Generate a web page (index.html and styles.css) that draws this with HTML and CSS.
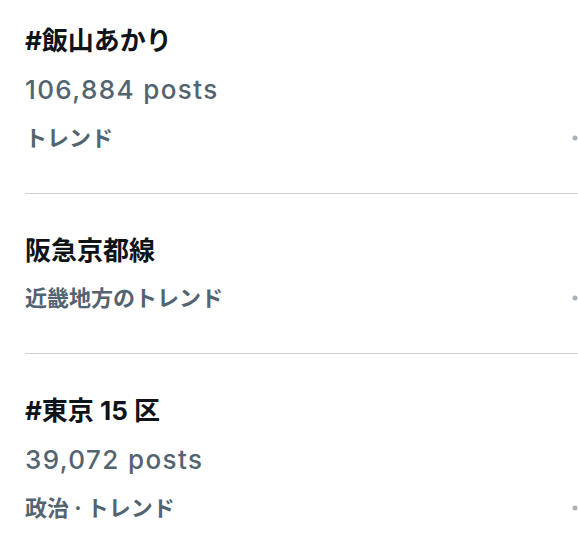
FILE: index.html
```html
<!DOCTYPE html>
<html lang="ja">
<head>
    <meta charset="UTF-8">
    <title>トレンド</title>
    <link rel="stylesheet" href="styles.css">
</head>
<body>
    <div class="list">
        <div class="trend">
            <div class="title">#飯山あかり</div>
            <div class="count">106,884 posts</div>
            <div class="meta">
                <span>トレンド</span>
                <svg class="more" width="24" height="6" viewBox="0 0 24 6"><circle cx="3" cy="3" r="2.5"/><circle cx="12" cy="3" r="2.5"/><circle cx="21" cy="3" r="2.5"/></svg>
            </div>
        </div>
        <div class="trend">
            <div class="title">阪急京都線</div>
            <div class="meta">
                <span>近畿地方のトレンド</span>
                <svg class="more" width="24" height="6" viewBox="0 0 24 6"><circle cx="3" cy="3" r="2.5"/><circle cx="12" cy="3" r="2.5"/><circle cx="21" cy="3" r="2.5"/></svg>
            </div>
        </div>
        <div class="trend">
            <div class="title">#東京 15 区</div>
            <div class="count">39,072 posts</div>
            <div class="meta">
                <span>政治 · トレンド</span>
                <svg class="more" width="24" height="6" viewBox="0 0 24 6"><circle cx="3" cy="3" r="2.5"/><circle cx="12" cy="3" r="2.5"/><circle cx="21" cy="3" r="2.5"/></svg>
            </div>
        </div>
    </div>
</body>
</html>
```

FILE: styles.css
```css
body { margin: 0; background: #fff; overflow: hidden; font-family: Inter, "Noto Sans CJK JP", sans-serif; }
.list { margin-top: -16px; padding-left: 25px; }
.trend { display: flex; flex-direction: column; padding: 40px 0 38px; border-bottom: 1px solid #cfd3d6; }
.trend:last-child { padding-bottom: 0; border-bottom: none; }
.title { line-height: 34px; font-size: 26px; font-weight: 700; color: #0f1419; }
.count { line-height: 34px; margin-top: 15px; font-size: 26px; font-weight: 500; letter-spacing: 1.4px; color: #536471; }
.meta { display: flex; justify-content: space-between; align-items: center; line-height: 34px; margin-top: 14px; font-size: 22px; font-weight: 700; color: #536471; }
.title + .meta { margin-top: 13px; }
.more { fill: #aab2b8; margin-right: -18px; }
```
